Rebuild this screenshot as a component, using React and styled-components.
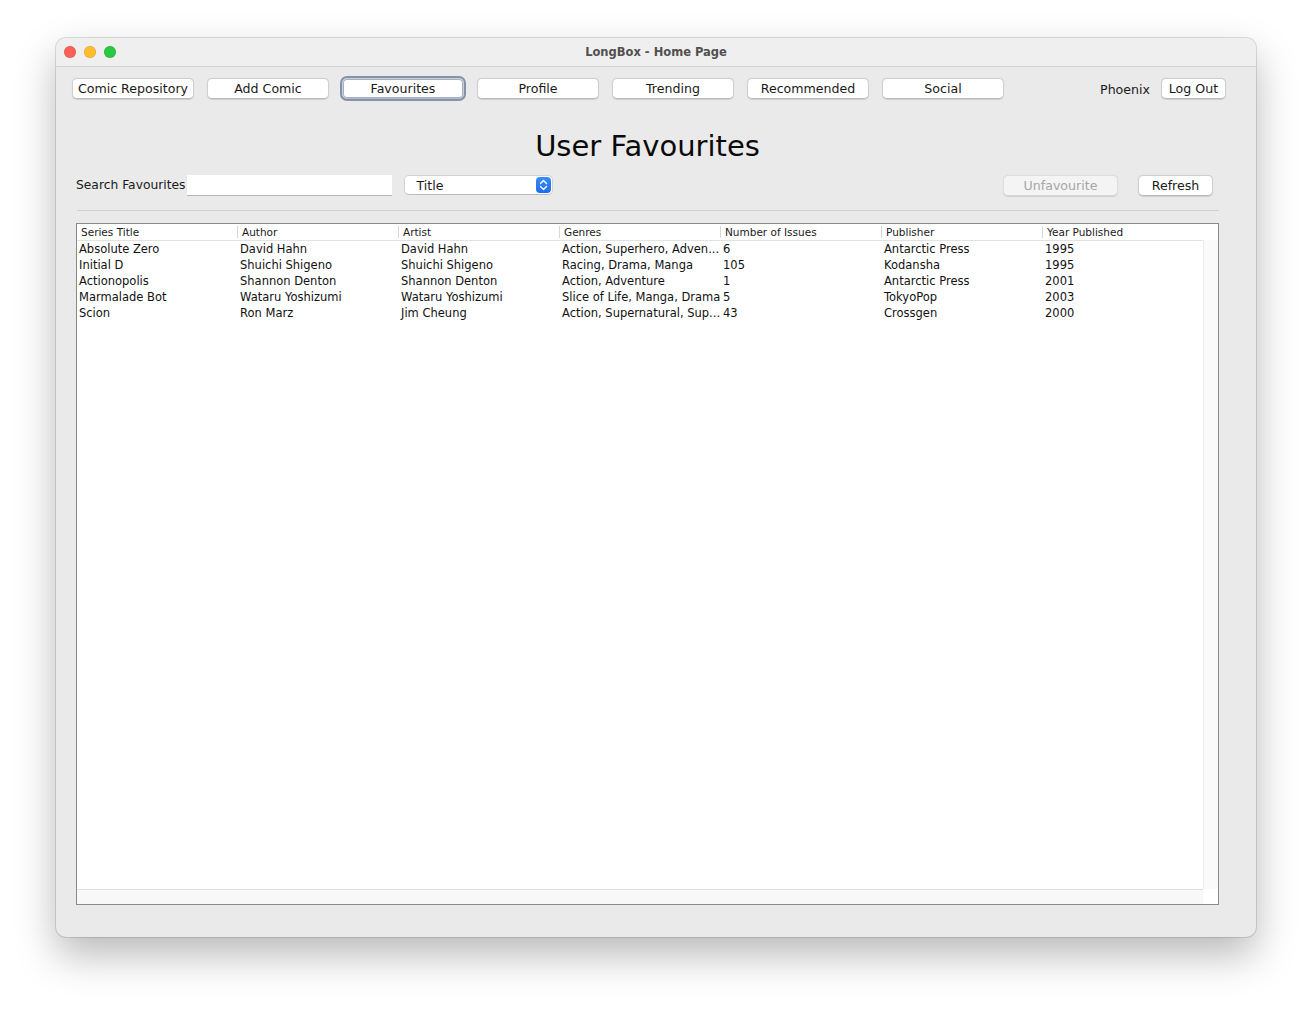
import React from "react";
import styled, { createGlobalStyle } from "styled-components";

const GlobalStyle = createGlobalStyle`
  html, body {
    margin: 0;
    padding: 0;
    background: #ffffff;
  }
  body {
    font-family: "DejaVu Sans", "Liberation Sans", sans-serif;
  }
`;

const Page = styled.div`
  width: 1312px;
  height: 1012px;
  padding: 38px 0 0 56px;
  box-sizing: border-box;
`;

const Window = styled.div`
  width: 1200px;
  height: 899px;
  border-radius: 10px;
  background: #eaeaea;
  box-shadow: 0 0 0 1px rgba(0, 0, 0, 0.12), 0 18px 40px rgba(0, 0, 0, 0.28);
  overflow: hidden;
  display: flex;
  flex-direction: column;
`;

const TitleBar = styled.div`
  height: 28px;
  flex: none;
  background: #f0efef;
  border-bottom: 1px solid #d2d2d2;
  display: flex;
  align-items: center;
  position: relative;
  padding-left: 8px;
`;

const Lights = styled.div`
  display: flex;
  gap: 8px;
`;

const Light = styled.span`
  width: 12px;
  height: 12px;
  border-radius: 50%;
  background: ${(p) => p.$color};
  box-shadow: inset 0 0 0 0.5px rgba(0, 0, 0, 0.15);
`;

const WindowTitle = styled.div`
  position: absolute;
  left: 0;
  right: 0;
  text-align: center;
  font-size: 11.5px;
  font-weight: bold;
  color: #505050;
  pointer-events: none;
`;

const Content = styled.div`
  flex: 1;
  display: flex;
  flex-direction: column;
  padding: 11px 37px 0 20px;
`;

const NavRow = styled.div`
  display: flex;
  align-items: center;
  margin-left: -4px;
`;

const NavButtons = styled.div`
  display: flex;
  gap: 13px;
`;

const Button = styled.button`
  width: ${(p) => p.$width || 122}px;
  height: 21px;
  padding: 0;
  font-family: "DejaVu Sans", sans-serif;
  font-size: 12.6px;
  color: ${(p) => (p.disabled ? "#a6a6a6" : "#1a1a1a")};
  background: ${(p) => (p.disabled ? "#f4f4f4" : "#ffffff")};
  border: 1px solid ${(p) => (p.disabled ? "#dedede" : "#cfcfcf")};
  border-bottom-color: ${(p) => (p.disabled ? "#d6d6d6" : "#b9b9b9")};
  border-radius: 5px;
  box-shadow: ${(p) =>
    p.$focused ? "0 0 0 2px #8293aa, inset 0 0 0 1px #a3b1c4" : "0 0.5px 1px rgba(0,0,0,0.12)"};
  display: flex;
  align-items: center;
  justify-content: center;
`;

const UserArea = styled.div`
  margin-left: auto;
  display: flex;
  align-items: center;
  gap: 11px;
  margin-right: -7px;
`;

const UserName = styled.span`
  font-size: 12.6px;
  color: #1a1a1a;
  margin-top: 2px;
`;

const Heading = styled.h1`
  margin: 27px 0 0;
  text-align: center;
  font-size: 29px;
  font-weight: normal;
  color: #0a0a0a;
  line-height: 40px;
`;

const SearchRow = styled.div`
  margin-top: 8px;
  display: flex;
  align-items: center;
  height: 22px;
`;

const Label = styled.span`
  font-size: 12.3px;
  color: #1a1a1a;
`;

const TextField = styled.div`
  width: 205px;
  height: 21px;
  background: #ffffff;
  border-bottom: 1px solid #b5b5b5;
  box-sizing: border-box;
  margin-left: 1px;
`;

const Combo = styled.div`
  margin-left: 12px;
  width: 149px;
  height: 20px;
  background: #ffffff;
  border: 1px solid #d2d2d2;
  border-bottom-color: #bdbdbd;
  border-radius: 5px;
  box-sizing: border-box;
  display: flex;
  align-items: center;
  padding: 0 1px 0 12px;
  font-size: 12.6px;
  color: #1a1a1a;
`;

const ComboText = styled.span`
  flex: 1;
`;

const Stepper = styled.span`
  width: 15px;
  height: 16px;
  border-radius: 4px;
  background: linear-gradient(#3b8cf7, #1a6fe8);
  display: flex;
  align-items: center;
  justify-content: center;
`;

const RightButtons = styled.div`
  margin-left: auto;
  display: flex;
  gap: 20px;
  margin-right: 6px;
`;

const Separator = styled.div`
  height: 1px;
  background: #cfcfcf;
  margin: 14px 0 0 1px;
`;

const Table = styled.div`
  margin-top: 12px;
  height: 682px;
  border: 1px solid #8a8a8a;
  background: #ffffff;
  display: grid;
  grid-template-columns: 1fr 15px;
  grid-template-rows: 1fr 15px;
  box-sizing: border-box;
`;

const TableBody = styled.div`
  overflow: hidden;
`;

const HeaderRow = styled.div`
  display: grid;
  grid-template-columns: repeat(7, 161px);
  height: 16px;
  border-bottom: 1px solid #e2e2e2;
  background: #ffffff;
`;

const HeaderCell = styled.div`
  font-size: 10.5px;
  color: #1a1a1a;
  padding-left: 4px;
  border-right: 1px solid #d8d8d8;
  margin: 2px 0;
  line-height: 12px;
  white-space: nowrap;
  overflow: hidden;
`;

const Row = styled.div`
  display: grid;
  grid-template-columns: repeat(7, 161px);
  height: 16px;
`;

const Cell = styled.div`
  font-size: 11.5px;
  color: #111111;
  padding-left: 2px;
  line-height: 16px;
  white-space: nowrap;
  overflow: hidden;
`;

const VScroll = styled.div`
  background: #fafafa;
  border-left: 1px solid #ececec;
  margin-top: 16px;
`;

const HScroll = styled.div`
  background: #f8f8f8;
  border-top: 1px solid #e0e0e0;
`;

const Corner = styled.div`
  background: #ffffff;
`;

const columns = [
  "Series Title",
  "Author",
  "Artist",
  "Genres",
  "Number of Issues",
  "Publisher",
  "Year Published",
];

const rows = [
  ["Absolute Zero", "David Hahn", "David Hahn", "Action, Superhero, Adven...", "6", "Antarctic Press", "1995"],
  ["Initial D", "Shuichi Shigeno", "Shuichi Shigeno", "Racing, Drama, Manga", "105", "Kodansha", "1995"],
  ["Actionopolis", "Shannon Denton", "Shannon Denton", "Action, Adventure", "1", "Antarctic Press", "2001"],
  ["Marmalade Bot", "Wataru Yoshizumi", "Wataru Yoshizumi", "Slice of Life, Manga, Drama", "5", "TokyoPop", "2003"],
  ["Scion", "Ron Marz", "Jim Cheung", "Action, Supernatural, Sup...", "43", "Crossgen", "2000"],
];

const navItems = ["Comic Repository", "Add Comic", "Favourites", "Profile", "Trending", "Recommended", "Social"];

export default function App() {
  return (
    <>
      <GlobalStyle />
      <Page>
        <Window>
          <TitleBar>
            <Lights>
              <Light $color="#fe5f57" />
              <Light $color="#febc2e" />
              <Light $color="#28c840" />
            </Lights>
            <WindowTitle>LongBox - Home Page</WindowTitle>
          </TitleBar>
          <Content>
            <NavRow>
              <NavButtons>
                {navItems.map((n) => (
                  <Button key={n} $focused={n === "Favourites"}>
                    {n}
                  </Button>
                ))}
              </NavButtons>
              <UserArea>
                <UserName>Phoenix</UserName>
                <Button $width={65}>Log Out</Button>
              </UserArea>
            </NavRow>
            <Heading>User Favourites</Heading>
            <SearchRow>
              <Label>Search Favourites</Label>
              <TextField />
              <Combo>
                <ComboText>Title</ComboText>
                <Stepper>
                  <svg width="9" height="12" viewBox="0 0 9 12">
                    <path d="M1.5 4.5 L4.5 1.5 L7.5 4.5 M1.5 7.5 L4.5 10.5 L7.5 7.5" fill="none" stroke="#fff" strokeWidth="1.4" strokeLinecap="round" strokeLinejoin="round" />
                  </svg>
                </Stepper>
              </Combo>
              <RightButtons>
                <Button $width={115} disabled>
                  Unfavourite
                </Button>
                <Button $width={75}>Refresh</Button>
              </RightButtons>
            </SearchRow>
            <Separator />
            <Table>
              <TableBody>
                <HeaderRow>
                  {columns.map((c) => (
                    <HeaderCell key={c}>{c}</HeaderCell>
                  ))}
                </HeaderRow>
                {rows.map((r, i) => (
                  <Row key={i}>
                    {r.map((v, j) => (
                      <Cell key={j}>{v}</Cell>
                    ))}
                  </Row>
                ))}
              </TableBody>
              <VScroll />
              <HScroll />
              <Corner />
            </Table>
          </Content>
        </Window>
      </Page>
    </>
  );
}
